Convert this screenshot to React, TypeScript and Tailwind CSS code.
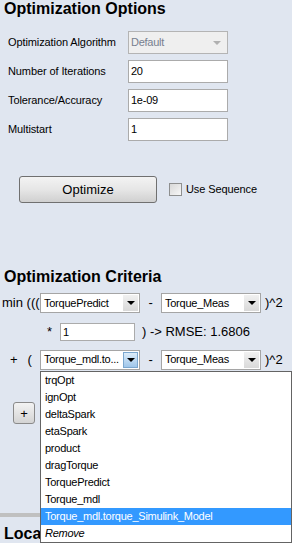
import React from 'react'

const options = [
  'trqOpt',
  'ignOpt',
  'deltaSpark',
  'etaSpark',
  'product',
  'dragTorque',
  'TorquePredict',
  'Torque_mdl',
  'Torque_mdl.torque_Simulink_Model',
]

function Arrow({ color = 'border-t-black' }: { color?: string }) {
  return <span className={`block w-0 h-0 border-l-[4px] border-r-[4px] border-t-[4px] border-l-transparent border-r-transparent ${color}`} />
}

function Field({ label, value, disabled }: { label: string; value: string; disabled?: boolean }) {
  return (
    <div className="flex items-center h-[23px]">
      <span className="w-[128px] pl-[8px] tracking-[-0.1px]">{label}</span>
      {disabled ? (
        <div className="w-[100px] h-[23px] border border-[#b4b4b4] bg-[#efefef] flex items-center justify-between pl-[2px] pr-[6px] text-[#77808f]">
          <span>{value}</span>
          <Arrow color="border-t-[#b0b0b0]" />
        </div>
      ) : (
        <div className="w-[100px] h-[23px] border border-[#ababab] bg-white flex items-center pl-[2px]">{value}</div>
      )}
    </div>
  )
}

function Select({ value, active }: { value: string; active?: boolean }) {
  return (
    <div className="w-[100px] h-[20px] border border-[#a5a5a5] bg-white flex items-stretch p-[1px]">
      <span className="flex-1 pl-[2px] flex items-center overflow-hidden whitespace-nowrap">{value}</span>
      <span
        className={`w-[15px] flex items-center justify-center ${
          active ? 'bg-gradient-to-b from-[#dcecf9] to-[#9fc6ea] border border-[#7ba7cf]' : 'bg-gradient-to-b from-[#f1f1f1] to-[#d9d9d9]'
        }`}
      >
        <Arrow />
      </span>
    </div>
  )
}

export default function App() {
  return (
    <div className="relative w-[292px] h-[543px] overflow-hidden bg-[#e0e6f0] text-black font-['Liberation_Sans',Arial,sans-serif] text-[11px] tracking-[-0.25px]">
      <h2 className="h-[18px] leading-[18px] pl-[4px] text-[16px] font-bold tracking-normal">Optimization Options</h2>

      <div className="mt-[13px] flex flex-col gap-[6px]">
        <Field label="Optimization Algorithm" value="Default" disabled />
        <Field label="Number of Iterations" value="20" />
        <Field label="Tolerance/Accuracy" value="1e-09" />
        <Field label="Multistart" value="1" />
      </div>

      <div className="mt-[35px] flex items-center h-[27px]">
        <button className="ml-[19px] w-[138px] h-[27px] rounded-[3px] border border-[#707070] bg-gradient-to-b from-[#f3f3f3] via-[#e6e6e6] to-[#d0d0d0] text-[13px] tracking-normal">
          Optimize
        </button>
        <span className="ml-[12px] w-[13px] h-[13px] border border-[#8e8f8f] bg-gradient-to-br from-[#d8d8d8] to-[#f7f7f7]" />
        <span className="ml-[4px] tracking-[-0.1px]">Use Sequence</span>
      </div>

      <h2 className="mt-[65px] h-[18px] leading-[18px] pl-[4px] text-[16px] font-bold tracking-normal">Optimization Criteria</h2>

      <div className="mt-[7px] flex items-center h-[20px]">
        <span className="w-[40px] pl-[2px] text-[13px] tracking-normal">min (((</span>
        <Select value="TorquePredict" />
        <span className="w-[21px] text-center text-[13px]">-</span>
        <Select value="Torque_Meas" />
        <span className="pl-[4px] text-[13px] tracking-normal">)^2</span>
      </div>

      <div className="mt-[10px] flex items-center h-[18px]">
        <span className="w-[60px] pl-[47px] text-[13px]">*</span>
        <div className="w-[75px] h-[18px] border border-[#ababab] bg-white flex items-center pl-[2px]">1</div>
        <span className="pl-[7px] text-[13px] tracking-normal">) -&gt; RMSE: 1.6806</span>
      </div>

      <div className="mt-[8px] flex items-center h-[21px]">
        <span className="w-[40px] pl-[10px] text-[13px] tracking-normal">
          +<span className="ml-[10px]">(</span>
        </span>
        <Select value="Torque_mdl.to..." active />
        <span className="w-[21px] text-center text-[13px]">-</span>
        <Select value="Torque_Meas" />
        <span className="pl-[4px] text-[13px] tracking-normal">)^2</span>
      </div>

      <button className="mt-[32px] ml-[13px] w-[22px] h-[22px] rounded-[3px] border border-[#8a8a8a] bg-gradient-to-b from-[#f3f3f3] to-[#d4d4d4] text-[13px] leading-none flex items-center justify-center">
        +
      </button>

      <div className="mt-[89px] h-[4px] bg-[#c0c0c0]" />
      <h2 className="mt-[8px] w-[40px] overflow-hidden whitespace-nowrap h-[18px] leading-[18px] pl-[4px] text-[16px] font-bold tracking-normal">Loca</h2>

      <div className="absolute left-[40px] top-[371px] w-[252px] h-[172px] border border-[#646464] bg-white">
        {options.map((o, i) => (
          <div
            key={o}
            className={`h-[17px] leading-[17px] pl-[4px] whitespace-nowrap ${i === options.length - 1 ? 'bg-[#3399ff] text-white' : ''}`}
          >
            {o}
          </div>
        ))}
        <div className="h-[17px] leading-[17px] pl-[4px] italic">Remove</div>
      </div>
    </div>
  )
}
